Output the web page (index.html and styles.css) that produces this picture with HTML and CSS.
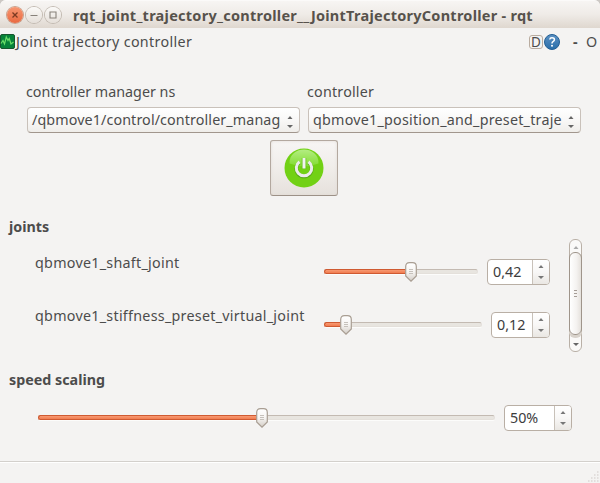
FILE: index.html
```html
<!DOCTYPE html>
<html lang="en">
<head>
<meta charset="utf-8">
<title>rqt_joint_trajectory_controller__JointTrajectoryController - rqt</title>
<link rel="stylesheet" href="styles.css">
</head>
<body>
<svg class="defs" width="0" height="0">
  <defs>
    <linearGradient id="knob" x1="0" y1="0" x2="0" y2="1"><stop offset="0" stop-color="#fff"/><stop offset=".5" stop-color="#f6f4f2"/><stop offset="1" stop-color="#d3cdc6"/></linearGradient>
    <symbol id="handle" viewBox="0 0 12 20">
      <path d="M.7 4.5Q.7.7 4.5.7h3Q11.300.7 11.300 4.500V14L6 19.200.7 14z" fill="url(#knob)" stroke="#a99e93" stroke-width="1.200"/>
      <path d="M4 7.500h4M4 9.500h4M4 11.500h4" stroke="#c6c1bb" stroke-width="1"/>
    </symbol>
    <symbol id="up" viewBox="0 0 6 3"><path d="M.5 3 3 0l2.500 3z" fill="currentColor"/></symbol>
    <symbol id="down" viewBox="0 0 6 3"><path d="M0 0h6L3 3z" fill="currentColor"/></symbol>
  </defs>
</svg>
<div class="window">
  <header class="titlebar">
    <span class="wbtn close"><svg viewBox="0 0 16 16"><path d="M5.500 5.500l5 5m0-5l-5 5" stroke="#7b3a22" stroke-width="1.300"/></svg></span>
    <span class="wbtn"><svg viewBox="0 0 16 16"><path d="M4.500 8.500h7" stroke="#87817a" stroke-width="1"/></svg></span>
    <span class="wbtn"><svg viewBox="0 0 16 16"><path d="M5 5h6v6H5z" fill="none" stroke="#87817a" stroke-width="1.100"/></svg></span>
    <span class="title">rqt_joint_trajectory_controller__JointTrajectoryController - rqt</span>
  </header>
  <div class="dockbar">
    <svg class="plug" viewBox="0 0 15 15"><rect x=".5" y=".5" width="14" height="14" rx="1.500" fill="#078239" stroke="#17562e"/><path d="M1 9.500 3 6.500 4.500 10 6.300 3 8 6.500l1.200-2L11 10l2.500-2" fill="none" stroke="#69dc68" stroke-width="1.200"/></svg>
    <span class="docktitle">Joint trajectory controller</span>
    <span class="dbtn">D</span>
    <svg class="help" viewBox="0 0 16 16"><defs><linearGradient id="hb" x1="0" y1="0" x2="0" y2="1"><stop offset="0" stop-color="#5c91c3"/><stop offset="1" stop-color="#286da9"/></linearGradient></defs><circle cx="8" cy="8" r="7.500" fill="url(#hb)" stroke="#245f94"/><path d="M5.700 5.500Q6 3.700 8 3.700c3.200 0 2.900 2.900 1 3.900Q8 8.200 8 9.500" fill="none" stroke="#fff" stroke-width="1.500"/><circle cx="8" cy="11.800" r="1" fill="#fff"/></svg>
    <span class="dash">-</span><span class="oh">O</span>
  </div>
  <main>
    <section class="pickers">
      <div class="field"><span class="label l-ns">controller manager ns</span>
        <div class="combo"><span class="value v-ns">/qbmove1/control/controller_manag</span><span class="arrows"><svg><use href="#up"/></svg><svg><use href="#down"/></svg></span></div></div>
      <div class="field"><span class="label l-ctl">controller</span>
        <div class="combo"><span class="value">qbmove1_position_and_preset_traje</span><span class="arrows"><svg><use href="#up"/></svg><svg><use href="#down"/></svg></span></div></div>
    </section>
    <button class="power"><svg viewBox="0 0 40 40"><defs><linearGradient id="gl" x1="0" y1="0" x2="0" y2="1"><stop offset="0" stop-color="#b4ed83"/><stop offset="1" stop-color="#83dc32"/></linearGradient></defs><circle cx="20" cy="20" r="19.500" fill="#72d115"/><path d="M5.500 15.500C5 6 13 1.500 20 1.500S35 6 34.500 15.500Q20 21 5.500 15.500z" fill="url(#gl)"/><path d="M15.500 13.800a7.700 7.700 0 1 0 9 0" transform="translate(0 .8)" fill="none" stroke="#58a51a" stroke-width="3.600"/><path d="M15.500 13.800a7.700 7.700 0 1 0 9 0" fill="none" stroke="#ececec" stroke-width="3"/><path d="M20 10v11" stroke="#65bd18" stroke-width="4.500"/><path d="M20 10v10.500" stroke="#f2f2f2" stroke-width="3"/></svg></button>
    <h2 class="h-joints">joints</h2>
    <section class="joints">
      <div class="rows">
        <div class="row"><span class="jname">qbmove1_shaft_joint</span>
          <div class="slider"><div class="fill" style="width:56.5%"></div><svg class="handle" style="left:56.5%"><use href="#handle"/></svg></div>
          <div class="spin s1"><span>0,42</span><i><svg><use href="#up"/></svg><svg><use href="#down"/></svg></i></div></div>
        <div class="row"><span class="jname">qbmove1_stiffness_preset_virtual_joint</span>
          <div class="slider"><div class="fill" style="width:13.5%"></div><svg class="handle" style="left:13.5%"><use href="#handle"/></svg></div>
          <div class="spin s2"><span>0,12</span><i><svg><use href="#up"/></svg><svg><use href="#down"/></svg></i></div></div>
      </div>
      <div class="scroll"><svg class="faint"><use href="#up"/></svg><div class="thumb"><b></b><b></b><b></b></div><svg><use href="#down"/></svg></div>
    </section>
    <h2 class="h-speed">speed scaling</h2>
    <section class="speed">
      <div class="slider"><div class="fill" style="width:49%"></div><svg class="handle" style="left:49%"><use href="#handle"/></svg></div>
      <div class="spin s3"><span>50%</span><i><svg><use href="#up"/></svg><svg><use href="#down"/></svg></i></div>
    </section>
  </main>
  <footer><svg viewBox="0 0 12 12"><path d="M10 1h1.500M7 4h1.500m1.500 0h1.500M4 7h1.500M7 7h1.500m1.500 0h1.500M1 10h1.500M4 10h1.500M7 10h1.500m1.500 0h1.500" stroke="#dbd8d5" stroke-width="1.500"/></svg></footer>
</div>
</body>
</html>
```
FILE: styles.css
```css
* { box-sizing: border-box; }
body { margin: 0; background: #ccc8c4; color: #4c4c4c; font: 14.300px/20px "Noto Sans", sans-serif; }
.defs { position: absolute; }
.window { width: 600px; height: 483px; display: flex; flex-direction: column; background: #f4f3f2; border-radius: 6px 6px 0 0; overflow: hidden; white-space: nowrap; }
.titlebar { height: 28px; flex: none; display: flex; align-items: center; gap: 3px; padding: 0 0 0 7px; background: linear-gradient(#f7f5f3, #efebe7 50%, #dfd7cf); border-top: 1px solid #fbfaf9; }
.wbtn { width: 16px; height: 16px; border-radius: 50%; background: linear-gradient(#fbfaf8, #e5dfd9); box-shadow: 0 0 0 1px #c2bab1; }
.wbtn svg { display: block; width: 16px; height: 16px; }
.wbtn.close { background: linear-gradient(#f79772, #e96940); box-shadow: 0 0 0 1px #c8a08b; }
.title { margin-left: 9px; font-weight: 700; font-size: 14.500px; color: #57524c; letter-spacing: .26px; }
.dockbar { height: 29px; flex: none; display: flex; align-items: center; padding-bottom: 1px; }
.plug { width: 15px; height: 15px; margin: -1px 1px 0 0; }
.docktitle { flex: 1; letter-spacing: .33px; }
.dbtn { width: 14px; height: 14px; border: 1px solid #b9aca0; border-radius: 3px; line-height: 13px; text-align: center; font-size: 13.500px; margin: -1px 1px 0 0; }
.help { width: 16px; height: 16px; margin-top: -1px; }
.dash { margin-left: 13px; font-weight: 700; width: 13px; }
.oh { width: 14px; }
main { flex: none; height: 404px; padding: 25px 9px 0; display: flex; flex-direction: column; }
.pickers { display: flex; gap: 8px; padding-left: 18px; height: 58px; }
.field { width: 273px; }
.label { display: block; height: 25px; line-height: 19px; margin-left: -1px; }
.l-ctl { letter-spacing: .2px; }
.combo { height: 26px; border: 1px solid #c9c1ba; border-bottom-color: #a1968d; border-radius: 4px; background: linear-gradient(#fff, #f9f8f7 50%, #efedea); display: flex; padding: 0 6px 0 4px; justify-content: space-between; }
.value { line-height: 23px; letter-spacing: .23px; }
.v-ns { letter-spacing: .11px; }
.arrows { color: #666; display: flex; flex-direction: column; gap: 6px; padding-top: 8px; }
.arrows svg, .spin svg, .scroll > svg { display: block; width: 6px; height: 3px; flex: none; }
.power { align-self: flex-start; width: 68px; height: 56px; margin: 0 0 0 261px; padding: 0; border: 1px solid #b3a89f; border-bottom-color: #9c9187; border-radius: 3px; background: linear-gradient(#f7f5f4, #f0edea 50%, #e6e1dc); box-shadow: inset 0 0 3px #e0d9d3; display: grid; place-items: center; }
.power svg { width: 40px; height: 40px; }
h2 { margin: 0; font-size: 14.300px; font-weight: 700; line-height: 20px; }
.h-joints { margin-top: 21px; }
.joints { height: 113px; margin-top: 2px; padding: 0 9px 0 26px; display: flex; justify-content: space-between; }
.rows { width: 515px; padding-top: 20px; display: flex; flex-direction: column; gap: 27px; }
.row { height: 26px; display: flex; align-items: center; }
.jname { width: 289px; flex: none; padding-bottom: 18px; line-height: 20px; letter-spacing: .27px; }
.slider { position: relative; flex: 1; height: 5px; margin-top: -1px; border: 1px solid #e4e0db; border-top-color: #c3bab2; border-radius: 3px; background: #e8e5e0; box-shadow: 0 1px #fcfcfb; }
.fill { position: absolute; left: -1px; top: -1px; height: 5px; background: linear-gradient(#f79a73, #f17c50); border: 1px solid #cf5a32; border-right: 0; border-radius: 3px 0 0 3px; }
.handle { position: absolute; width: 12px; height: 20px; top: -8px; transform: translateX(-6px); }
.spin { height: 26px; margin-top: -1px; border: 1px solid #b9afa5; border-radius: 4px; background: #fff; display: flex; margin-left: 9px; overflow: hidden; }
.spin span { flex: 1; padding-left: 5px; line-height: 24px; color: #3c3c3c; }
.spin i { width: 17px; border-left: 1px solid #c8c1b9; background: linear-gradient(#fff, #f8f7f6 50%, #eae7e3); display: flex; flex-direction: column; align-items: center; gap: 8px; padding-top: 5px; color: #777; }
.s1 { width: 63px; }
.s2 { width: 59px; }
.s3 { width: 68px; }
.scroll { width: 13px; border: 1px solid #b9b0a7; border-radius: 6px; background: #faf9f8; display: flex; flex-direction: column; align-items: center; padding: 6px 0 5px; color: #666; }
.scroll .faint { color: #aaa; }
.thumb { width: 13px; height: 84px; margin: 3px -1px 8px; border: 1px solid #9f958b; border-radius: 6px; background: linear-gradient(90deg, #fff, #f4f2f0 60%, #e5e1dc); box-shadow: 0 3px 0 #d8d2cb; display: flex; flex-direction: column; align-items: center; justify-content: center; gap: 2px; }
.thumb b { width: 3px; height: 1px; background: #a59d96; }
.h-speed { margin-top: 18px; }
.speed { display: flex; align-items: center; margin-top: 15px; padding: 0 19px 0 29px; height: 26px; }
footer { flex: 1; border-top: 1px solid #d3d0cc; box-shadow: inset 0 1px #fff; display: flex; justify-content: flex-end; align-items: flex-end; }
footer svg { width: 12px; height: 12px; margin-right: 1px; }
```
